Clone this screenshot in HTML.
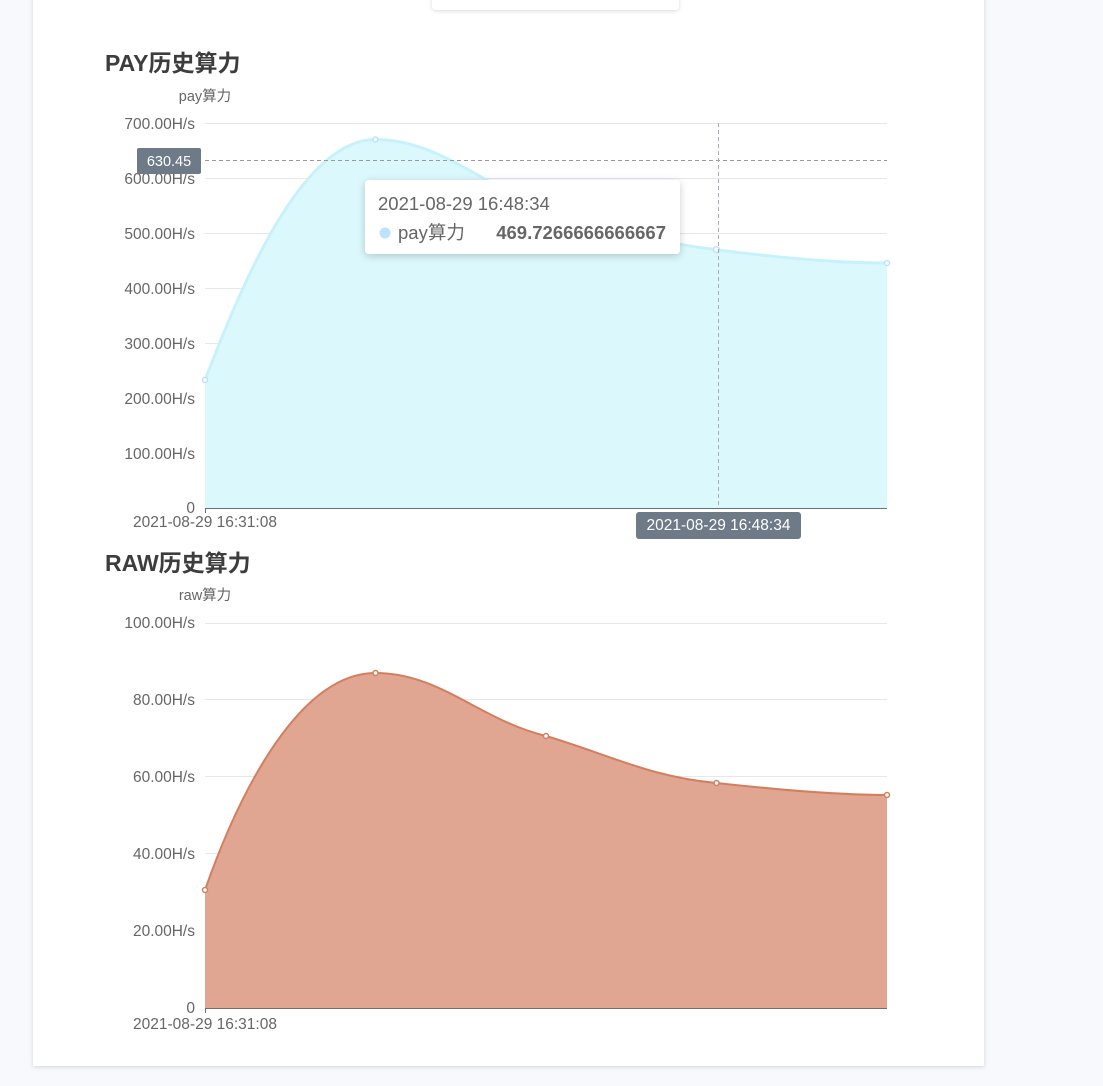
<!DOCTYPE html>
<html><head><meta charset="utf-8"><style>
html,body{margin:0;padding:0;background:#f8f9fd;width:1103px;height:1086px;overflow:hidden}
svg{display:block}
text{font-family:"Liberation Sans","Noto Sans CJK SC",sans-serif}
</style></head><body>
<svg width="1103" height="1086" viewBox="0 0 1103 1086" xmlns="http://www.w3.org/2000/svg">
<defs>
<filter id="sh" x="-10%" y="-10%" width="120%" height="130%"><feDropShadow dx="0" dy="1" stdDeviation="2" flood-color="#000" flood-opacity="0.15"/></filter>
<filter id="sh2" x="-10%" y="-20%" width="120%" height="150%"><feDropShadow dx="0" dy="2" stdDeviation="4" flood-color="#000" flood-opacity="0.2"/></filter>
</defs>
<rect x="33" y="-5" width="951" height="1071" fill="#fff" filter="url(#sh)"/>
<rect x="432" y="-10" width="247" height="20" rx="4" fill="#fff" filter="url(#sh)"/>

<!-- PAY chart -->
<text x="105" y="71" font-size="23" font-weight="bold" fill="#3d3d3d">PAY历史算力</text>
<text x="205" y="101" font-size="14.5" fill="#666" text-anchor="middle">pay算力</text>
<g stroke="#e3e7ef" stroke-width="1">
<line x1="205" y1="123.5" x2="887" y2="123.5"/><line x1="205" y1="178.5" x2="887" y2="178.5"/><line x1="205" y1="233.5" x2="887" y2="233.5"/><line x1="205" y1="288.5" x2="887" y2="288.5"/><line x1="205" y1="343.5" x2="887" y2="343.5"/><line x1="205" y1="398.5" x2="887" y2="398.5"/><line x1="205" y1="453.5" x2="887" y2="453.5"/>
</g>
<g font-size="15.5" fill="#666" text-anchor="end">
<text x="195" y="129">700.00H/s</text><text x="195" y="184">600.00H/s</text><text x="195" y="239">500.00H/s</text><text x="195" y="294">400.00H/s</text><text x="195" y="349">300.00H/s</text><text x="195" y="404">200.00H/s</text><text x="195" y="459">100.00H/s</text><text x="195" y="513">0</text>
</g>
<path d="M205,380 C240,290 300,139.5 375.5,139.5 C440,139.5 490,190 546,210 C600,228 660,243 716.5,249.7 C780,258 840,263 887,263 L887,508 L205,508 Z" fill="#dbf8fc"/>
<path d="M205,380 C240,290 300,139.5 375.5,139.5 C440,139.5 490,190 546,210 C600,228 660,243 716.5,249.7 C780,258 840,263 887,263" fill="none" stroke="#c8f2fb" stroke-width="3"/>
<g fill="#fff" stroke="#bde3fb" stroke-width="1.5">
<circle cx="205" cy="380" r="2.5"/><circle cx="375.5" cy="139.5" r="2.5"/><circle cx="716.5" cy="249.7" r="3"/><circle cx="887" cy="263" r="2.5"/>
</g>
<line x1="205" y1="508.5" x2="887" y2="508.5" stroke="#6e7079" stroke-width="1"/>
<line x1="205.5" y1="508" x2="205.5" y2="513" stroke="#6e7079"/>
<text x="205" y="527" font-size="15.5" fill="#666" text-anchor="middle">2021-08-29 16:31:08</text>
<line x1="205" y1="160.5" x2="887" y2="160.5" stroke="#9a9a9a" stroke-dasharray="4,3"/>
<line x1="718.5" y1="123" x2="718.5" y2="508" stroke="#aab" stroke-dasharray="4,3"/>
<rect x="137" y="148" width="64" height="26" rx="2" fill="#6e7a87"/>
<text x="169" y="166" font-size="14.5" fill="#fff" text-anchor="middle">630.45</text>
<rect x="636" y="512" width="165" height="27" rx="3" fill="#6e7a87"/>
<text x="718.5" y="530" font-size="15.5" fill="#fff" text-anchor="middle">2021-08-29 16:48:34</text>
<rect x="365" y="180" width="315" height="74" rx="4" fill="#fff" filter="url(#sh2)"/>
<text x="378" y="210" font-size="18.5" fill="#666">2021-08-29 16:48:34</text>
<circle cx="385" cy="233" r="5.5" fill="#bde3fb"/>
<text x="398" y="239" font-size="18.5" fill="#666">pay算力</text>
<text x="666" y="239" font-size="18.5" font-weight="bold" fill="#666" text-anchor="end">469.7266666666667</text>

<!-- RAW chart -->
<text x="105" y="571" font-size="23" font-weight="bold" fill="#3d3d3d">RAW历史算力</text>
<text x="205" y="600" font-size="14.5" fill="#666" text-anchor="middle">raw算力</text>
<g stroke="#e3e7ef" stroke-width="1">
<line x1="205" y1="623.5" x2="887" y2="623.5"/><line x1="205" y1="699.5" x2="887" y2="699.5"/><line x1="205" y1="776.5" x2="887" y2="776.5"/><line x1="205" y1="853.5" x2="887" y2="853.5"/><line x1="205" y1="930.5" x2="887" y2="930.5"/>
</g>
<g font-size="15.5" fill="#666" text-anchor="end">
<text x="195" y="628">100.00H/s</text><text x="195" y="705">80.00H/s</text><text x="195" y="782">60.00H/s</text><text x="195" y="859">40.00H/s</text><text x="195" y="936">20.00H/s</text><text x="195" y="1013">0</text>
</g>
<path d="M205,890 C240,790 300,673 375.5,673 C440,673 480,720 546,736 C610,755 650,777 716.5,783 C780,790 840,795 887,795 L887,1008 L205,1008 Z" fill="#e1a691"/>
<path d="M205,890 C240,790 300,673 375.5,673 C440,673 480,720 546,736 C610,755 650,777 716.5,783 C780,790 840,795 887,795" fill="none" stroke="#d27f60" stroke-width="2"/>
<g fill="#fff" stroke="#d27f60" stroke-width="1.5">
<circle cx="205" cy="890" r="2.5"/><circle cx="375.5" cy="673" r="2.5"/><circle cx="546" cy="736" r="2.5"/><circle cx="716.5" cy="783" r="2.5"/><circle cx="887" cy="795" r="2.5"/>
</g>
<line x1="205" y1="1008.5" x2="887" y2="1008.5" stroke="#6e7079"/>
<line x1="205.5" y1="1008" x2="205.5" y2="1013" stroke="#6e7079"/>
<text x="205" y="1029" font-size="15.5" fill="#666" text-anchor="middle">2021-08-29 16:31:08</text>
</svg>
</body></html>
